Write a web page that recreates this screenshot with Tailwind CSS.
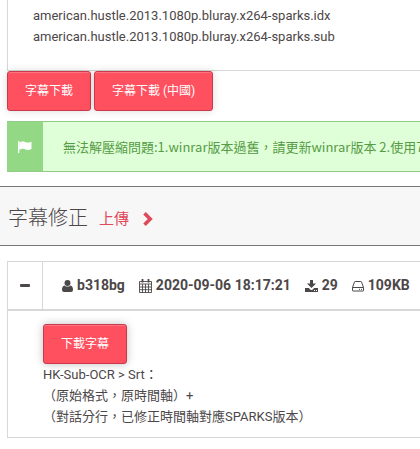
<!DOCTYPE html>
<html lang="zh-Hant">
<head>
  <meta charset="UTF-8">
  <meta name="viewport" content="width=device-width, initial-scale=1">
  <title>字幕下載</title>
  <script src="https://cdn.jsdelivr.net/npm/@tailwindcss/browser@4"></script>
</head>
<body class="bg-white text-[#4c4748] text-[13px] leading-[21px] font-['Roboto','Noto_Sans_CJK_TC',sans-serif]">

  <!-- file list -->
  <div class="ml-[7px] h-[71px] pl-[25px] pt-[5px] border-l border-b border-[#d8d8d8]">
    <p>american.hustle.2013.1080p.bluray.x264-sparks.idx</p>
    <p>american.hustle.2013.1080p.bluray.x264-sparks.sub</p>
  </div>

  <div class="ml-[7px] flex gap-[3px]">
    <button type="button" class="h-10 px-[17px] rounded-[3px] border border-[#c93a4c] bg-[#ff5060] text-white text-[12px] shadow-[0_0_8px_rgba(0,0,0,0.15),inset_0_1px_0_#ff7582]">字幕下載</button>
    <button type="button" class="h-10 px-[17px] rounded-[3px] border border-[#c93a4c] bg-[#ff5060] text-white text-[12px] shadow-[0_0_8px_rgba(0,0,0,0.15),inset_0_1px_0_#ff7582]">字幕下載 (中國)</button>
  </div>

  <!-- notice -->
  <div class="ml-[7px] mt-[10px] h-[51px] flex overflow-hidden border-y border-[#92cb88] bg-[#dfffd8] text-[#569b45] whitespace-nowrap">
    <div class="w-9 shrink-0 bg-[#93d985] flex items-center justify-center">
      <svg class="w-[14px] h-3" viewBox="0 0 14 12" fill="#fff" aria-hidden="true">
        <path d="M0 0h1.3v12H0z"/>
        <path d="M1.3 1.400C3 .6 5-.1 7 .9c2 1 4 .9 6.500-.2v7.200c-2.500 1.200-4.500 1.300-6.500.4-2-.9-4-.3-5.700.6z"/>
      </svg>
    </div>
    <p class="pl-5 self-center font-['Noto_Sans_CJK_TC',sans-serif]">無法解壓縮問題:1.winrar版本過舊，請更新winrar版本 2.使用7</p>
  </div>

  <!-- section title -->
  <div class="mt-[14px] h-[60px] pl-2 pt-1 flex items-center border-y border-[#777] bg-[#f7f7f7]">
    <h2 class="text-[20px] leading-6 font-light">字幕修正</h2>
    <a href="#" class="ml-[11px] pt-[2px] flex items-center gap-[14px] text-[15px] text-[#e0495a]">上傳
      <svg class="w-[10px] h-[14px]" viewBox="0 0 10 14" fill="none" stroke="#e0495a" stroke-width="3.600" aria-hidden="true"><path d="M1.500 1.300 7.200 7 1.500 12.700"/></svg>
    </a>
  </div>

  <!-- uploaded version -->
  <div class="ml-[7px] mt-[15px] border border-r-0 border-[#d8d8d8]">
    <div class="h-[49px] flex border-b-2 border-[#d8d8d8]">
      <button type="button" aria-label="收合" class="w-[35px] shrink-0 border-r border-[#d8d8d8] flex items-center justify-center"><span class="w-[10px] h-[3px] rounded-[1px] bg-[#4c4748]"></span></button>
      <div class="pl-[19px] flex items-center gap-[14px] text-[14px] font-bold whitespace-nowrap">
        <span class="flex items-center gap-1">
          <svg class="w-[11px] h-3" viewBox="0 0 11 12" fill="#4c4748" aria-hidden="true">
            <circle cx="5.500" cy="3" r="3"/>
            <path d="M2.600 5.400C.7 5.700 0 7.600 0 9.800 0 11.200.9 12 2.100 12h6.800c1.200 0 2.100-.8 2.100-2.200 0-2.200-.7-4.100-2.600-4.400-.8.8-1.700 1.200-2.900 1.200s-2.100-.4-2.900-1.200z"/>
          </svg>b318bg</span>
        <span class="flex items-center gap-1">
          <svg class="w-[13px] h-[14px]" viewBox="0 0 13 14" fill="none" stroke="#4c4748" aria-hidden="true">
            <path stroke-width=".9" d="M.5 2.500h12v11H.5zM.5 5h12M.5 8h12M.5 10.700h12M3.500 5v8.500M6.500 5v8.500M9.500 5v8.500"/>
            <path stroke-width="1.800" d="M3.500 0v3.500M9.500 0v3.500"/>
          </svg>2020-09-06 18:17:21</span>
        <span class="flex items-center gap-1">
          <svg class="w-[13px] h-3" viewBox="0 0 13 12" fill="#4c4748" aria-hidden="true">
            <path d="M5 0h3v3.600h3L6.500 8.100 2 3.600h3z"/>
            <path fill-rule="evenodd" d="M0 8h3.800l1.500 1.400c.7.700 1.700.7 2.400 0L9.200 8H13v4H0zM9 10v1h1v-1zm2 0v1h1v-1z"/>
          </svg>29</span>
        <span class="flex items-center gap-1">
          <svg class="w-3 h-3" viewBox="0 0 12 12" fill="none" stroke="#4c4748" aria-hidden="true">
            <path d="M.5 7.500 2.500 1.900Q2.700 1.500 3.200 1.500h5.600q.5 0 .7.400l2 5.600v3q0 .5-.5.500H1q-.5 0-.5-.5zM.5 7.500h11"/>
            <path d="M7 9.300h1M9 9.300h1"/>
          </svg>109KB</span>
      </div>
    </div>
    <div class="pl-[35px] pt-[13px] pb-[10px]">
      <button type="button" class="block h-10 px-[17px] rounded-[3px] border border-[#c93a4c] bg-[#ff5060] text-white text-[12px] shadow-[0_0_8px_rgba(0,0,0,0.25),inset_0_1px_0_#ff7582]">下載字幕</button>
      <p>HK-Sub-OCR &gt; Srt：</p>
      <p>（原始格式，原時間軸）+</p>
      <p>（對話分行，已修正時間軸對應SPARKS版本）</p>
    </div>
  </div>

</body>
</html>
